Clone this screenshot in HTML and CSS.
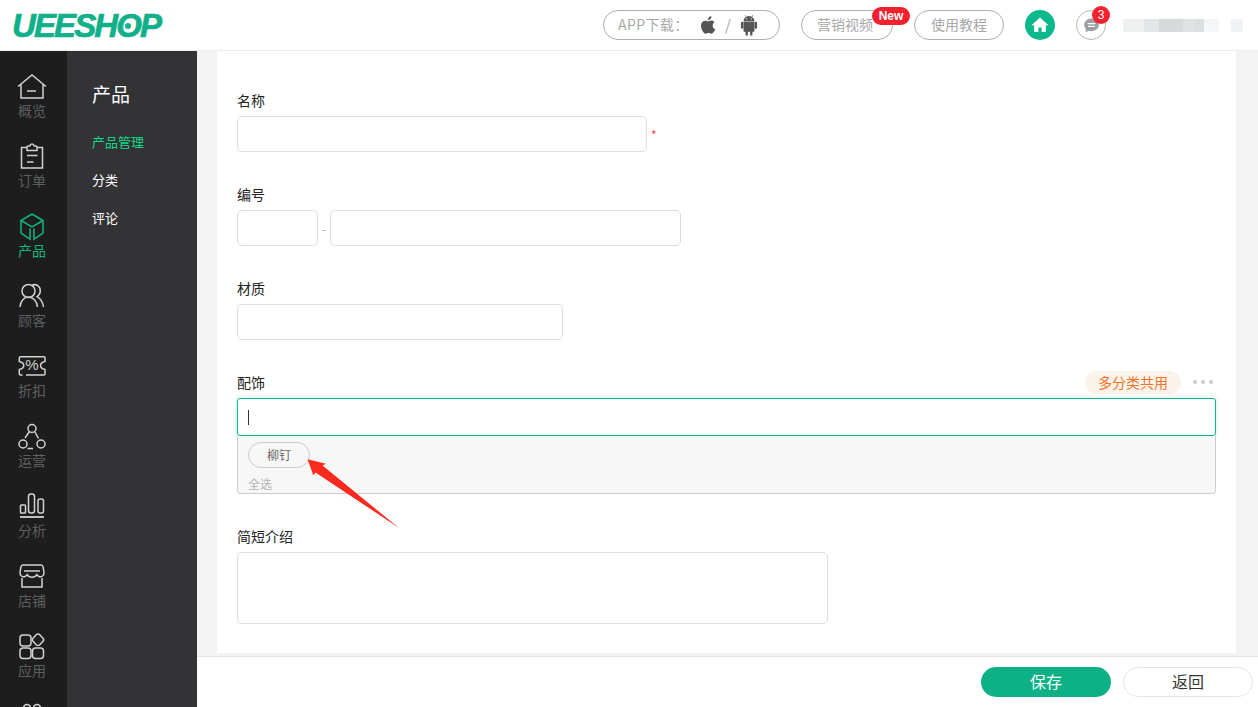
FILE: index.html
```html
<!DOCTYPE html>
<html lang="zh-CN">
<head>
<meta charset="utf-8">
<title>UEESHOP</title>
<link rel="stylesheet" href="styles.css">
</head>
<body>
<div class="app">
  <header class="topbar">
    <div class="logo"><span class="logo-text">UEESHOP</span><i class="logo-dot"></i></div>
    <div class="top-actions">
      <div class="pill pill-app">
        <span class="app-text">APP下载：</span>
        <svg class="os os-apple" viewBox="0 0 24 24" width="22" height="22"><path fill="#555" d="M17.100 12.700c0-2.400 2-3.500 2-3.600-1.100-1.600-2.800-1.800-3.400-1.900-1.400-.1-2.800.9-3.500.9-.7 0-1.900-.9-3.100-.8-1.600 0-3.100.9-3.900 2.300-1.700 2.900-.4 7.200 1.200 9.500.8 1.200 1.800 2.400 3 2.400 1.200 0 1.700-.8 3.100-.8 1.500 0 1.900.8 3.200.8 1.300 0 2.100-1.200 2.900-2.300.9-1.300 1.300-2.600 1.300-2.700-.1 0-2.800-1.100-2.800-3.800zM14.700 5.500c.7-.8 1.100-1.900 1-3-.9 0-2.100.6-2.800 1.400-.6.7-1.100 1.800-1 2.900 1.100.1 2.100-.5 2.800-1.300z"/></svg>
        <span class="slash">/</span>
        <svg class="os os-android" viewBox="0 0 24 24" width="22" height="22"><path fill="#555" d="M6 8.500h12v9.700c0 .7-.5 1.200-1.200 1.200h-1v2.900a1.300 1.300 0 0 1-2.600 0v-2.900h-2.400v2.900a1.300 1.300 0 0 1-2.600 0v-2.900h-1c-.7 0-1.200-.5-1.200-1.200zM4.400 8.500c.7 0 1.200.6 1.200 1.200v5.300a1.200 1.200 0 0 1-2.400 0V9.700c0-.6.500-1.200 1.200-1.200zM19.600 8.500c.7 0 1.200.6 1.200 1.200v5.300a1.200 1.200 0 0 1-2.400 0V9.700c0-.6.500-1.200 1.200-1.200zM15.400 3.200l1.100-1.700-.4-.3-1.200 1.800a6.600 6.600 0 0 0-5.800 0L7.900 1.200l-.4.300 1.100 1.700A5.200 5.200 0 0 0 6 7.800h12a5.200 5.200 0 0 0-2.600-4.600zM9.500 6a.6.600 0 1 1 0-1.300.6.600 0 0 1 0 1.300zm5 0a.6.600 0 1 1 0-1.300.6.600 0 0 1 0 1.300z"/></svg>
      </div>
      <div class="pill pill-video">营销视频<span class="badge-new">New</span></div>
      <div class="pill pill-help">使用教程</div>
      <div class="circle-home">
        <svg viewBox="0 0 20 20" width="20" height="20"><path fill="#fff" d="M10 2.500 1.500 10.300h2.600V17h4.300v-4.400h3.200V17h4.300v-6.700h2.600z"/></svg>
      </div>
      <div class="circle-msg">
        <svg viewBox="0 0 20 20" width="19" height="19"><path fill="#9b9fa3" d="M10 2.500c-4.400 0-7.700 3-7.700 6.800 0 1.800.8 3.400 2 4.600l-.8 3.300 3.500-1.700c.9.300 1.900.5 3 .5 4.400 0 7.700-3 7.700-6.700S14.400 2.500 10 2.500z"/><path stroke="#fff" stroke-width="1.300" d="M6 8h8M6.500 11h7"/></svg>
        <span class="badge-count">3</span>
      </div>
      <div class="blur-name"><i></i><i></i></div>
    </div>
  </header>

  <div class="workspace">
    <nav class="nav">
      <a class="nav-item"><svg viewBox="0 0 30 30"><path d="M1 13.500 15 2l14 11.500M4 11.500V25h22V11.500M10 18h9"/></svg><span>概览</span></a>
      <a class="nav-item"><svg viewBox="0 0 30 30"><path d="M10 4.500H4.500V25h21V4.500H20M10 7.500V4c0-.6.400-1 1-1h1.800c.3-1.200 1.200-2 2.200-2s1.900.8 2.200 2H19c.6 0 1 .4 1 1v3.500zM10 12.500h10.500M10 19h6.500"/></svg><span>订单</span></a>
      <a class="nav-item active"><svg viewBox="0 0 30 30"><path d="M15 1 26 7.500V20l-9 6V15.500M26 7.500 15 14 4 7.500 15 1M4 7.500V20l9 6V15.500"/></svg><span>产品</span></a>
      <a class="nav-item"><svg viewBox="0 0 30 30"><circle cx="11.500" cy="8" r="6.500"/><path d="M3 24c.5-6 4-10 8.500-10s8.500 4 9 10M15 2.200c4-1.700 8.500.8 8.300 5.800-.1 2.600-1.400 4.400-3.300 5.600 3.500 2 6 5.500 6.500 10.400"/></svg><span>顾客</span></a>
      <a class="nav-item"><svg viewBox="0 0 30 30"><path d="M3.500 3.700h23.300c.7 0 1.200.5 1.200 1.200v3.600c-2.500.6-4.500 1.800-4.500 4s2 3.400 4.500 4v4.300c0 .7-.5 1.200-1.200 1.200H9M5.500 22H3.500c-.7 0-1.200-.5-1.200-1.200v-4.300c2.500-.6 4.500-1.800 4.500-4s-2-3.400-4.500-4V4.900c0-.7.500-1.200 1.200-1.200"/></svg><b class="pct">%</b><span>折扣</span></a>
      <a class="nav-item"><svg viewBox="0 0 30 30"><circle cx="15" cy="5.500" r="4"/><circle cx="6" cy="21" r="4"/><circle cx="24" cy="21" r="4"/><path d="M12.500 8.500 8 15M18 9l3.500 6.500M10.500 25.500h5.500"/></svg><span>运营</span></a>
      <a class="nav-item"><svg viewBox="0 0 30 30"><rect x="3.500" y="12" width="5" height="8" rx=".8"/><rect x="11.500" y="1" width="6" height="19" rx="2.500"/><rect x="21" y="6" width="5.500" height="14" rx="2"/><path d="M3 24h24" stroke-width="1.800"/></svg><span>分析</span></a>
      <a class="nav-item"><svg viewBox="0 0 30 30"><path d="M6 2h18c1 0 1.500.5 2 1.500l1 6c.2 3-2.500 5-5 4-1-.3-1.600-1-2.200-1.800-.8 1.500-2.500 2.600-4.800 2.600s-4-1.100-4.800-2.600C9.600 12.500 9 13.200 8 13.500c-2.500 1-5.200-1-5-4l1-6C4.500 2.500 5 2 6 2zM7 8h16M5 15v9h20v-9"/></svg><span>店铺</span></a>
      <a class="nav-item"><svg viewBox="0 0 30 30"><rect x="3" y="2" width="11" height="11" rx="3"/><rect x="3" y="15" width="11" height="10.500" rx="3"/><rect x="15.500" y="15" width="11" height="10.500" rx="3"/><path d="M19.500 1.500c.8-.8 2.200-.8 3 0l3.500 3.800c.8.800.8 2.100 0 2.900L22.500 12c-.8.800-2.200.8-3 0L16 8.200c-.8-.8-.8-2.100 0-2.900z"/></svg><span>应用</span></a>
      <a class="nav-item"><svg viewBox="0 0 30 30"><circle cx="10" cy="5" r="3.500"/><circle cx="20" cy="5" r="3.500"/></svg></a>
    </nav>

    <aside class="subnav">
      <h2>产品</h2>
      <a class="sub-link active">产品管理</a>
      <a class="sub-link">分类</a>
      <a class="sub-link">评论</a>
    </aside>

    <main class="main">
      <div class="scroll">
        <form class="card">
          <div class="field">
            <label class="label">名称</label>
            <div class="line"><input class="input w-name" type="text"><em class="req">*</em></div>
          </div>
          <div class="field">
            <label class="label">编号</label>
            <div class="line"><input class="input w-pre" type="text"><span class="dash">-</span><input class="input w-num" type="text"></div>
          </div>
          <div class="field">
            <label class="label">材质</label>
            <div class="line"><input class="input w-mat" type="text"></div>
          </div>
          <div class="field field-acc">
            <div class="label-row">
              <label class="label">配饰</label>
              <div class="label-tools"><span class="shared">多分类共用</span><span class="dots"><i></i><i></i><i></i></span></div>
            </div>
            <div class="focus-box"><i class="caret"></i></div>
            <div class="options">
              <span class="chip">柳钉</span>
              <span class="all">全选</span>
            </div>
          </div>
          <div class="field">
            <label class="label">简短介绍</label>
            <textarea class="input area"></textarea>
          </div>
        </form>
      </div>
      <footer class="actions">
        <button class="btn btn-save" type="button">保存</button>
        <button class="btn btn-back" type="button">返回</button>
      </footer>
    </main>
  </div>
</div>
<svg class="arrow" viewBox="0 0 100 75" width="100" height="75"><path fill="#fb2a1e" d="M.5 2.300 19 6.700 15.500 8.500 92 71 8.500 15.500 6.300 18.300z"/></svg>
</body>
</html>
```
FILE: styles.css
```css
* { box-sizing: border-box; }
html, body { margin: 0; height: 100%; overflow: hidden; }
body {
  font-family: "Noto Sans CJK SC", "Liberation Sans", sans-serif;
  font-size: 14px;
  color: #222;
  background: #fff;
}
.app { display: flex; flex-direction: column; width: 1258px; height: 707px; }

/* top bar */
.topbar {
  flex: 0 0 51px;
  display: flex;
  justify-content: space-between;
  background: #fff;
  border-bottom: 1px solid #eee;
}
.logo { position: relative; padding: 10px 0 0 12px; }
.logo-text {
  font: italic 700 33px/32px "Liberation Sans", sans-serif;
  color: #10b08a;
  letter-spacing: -1.900px;
  -webkit-text-stroke: .7px #10b08a;
}
.logo-dot { position: absolute; left: 125px; top: 23px; width: 6px; height: 6px; border-radius: 50%; background: #10b08a; }
.top-actions { display: flex; align-items: flex-start; padding: 10px 0 0 0; }
.pill {
  position: relative;
  display: flex;
  align-items: center;
  justify-content: center;
  height: 30px;
  padding-bottom: 2px;
  border: 1px solid #a9b0ae;
  border-radius: 15px;
  color: #a8a8a8;
  font-size: 14px;
}
.pill-app { width: 177px; justify-content: flex-start; padding: 0 0 0 14px; }
.app-text { flex: none; width: 68px; letter-spacing: .4px; padding-bottom: 2px; white-space: nowrap; }
.os { flex: none; }
.os-apple { margin-left: 11px; }
.os-android { margin-left: 7px; }
.slash { flex: none; margin-left: 6px; font-size: 15px; padding-bottom: 2px; }
.pill-video { width: 92px; margin-left: 21px; padding-right: 4px; }
.pill-help { width: 90px; margin-left: 21px; }
.badge-new {
  position: absolute;
  left: 70px;
  top: -4px;
  width: 38px;
  height: 18px;
  border-radius: 9px;
  background: #f6202e;
  color: #fff;
  font: 700 12px/18px "Liberation Sans", sans-serif;
  text-align: center;
}
.circle-home {
  display: flex; align-items: center; justify-content: center;
  width: 30px; height: 30px; margin-left: 21px;
  border-radius: 50%; background: #0cb98c;
}
.circle-msg {
  position: relative;
  display: flex; align-items: center; justify-content: center;
  width: 30px; height: 30px; margin-left: 21px;
  border: 1px solid #b4b9b8; border-radius: 50%;
}
.badge-count {
  position: absolute; left: 15px; top: -5px;
  width: 18px; height: 18px; border-radius: 50%;
  background: #f6202e; color: #fff;
  font: 400 12px/18px "Liberation Sans", sans-serif; text-align: center;
}
.blur-name { display: flex; align-items: center; height: 13px; margin: 9px 15px 0 17px; }
.blur-name i { display: block; height: 13px; }
.blur-name i:first-child {
  width: 96px;
  background: linear-gradient(90deg, #eef0f0 0 22%, #e3e6e6 22% 38%, #d6dadb 38% 62%, #e0e3e3 62% 75%, #dcdfdf 75% 84%, #f4f6f8 84%);
}
.blur-name i:last-child { width: 12px; margin-left: 12px; background: #f0f2f5; }

.workspace { flex: 1; display: flex; min-height: 0; }

/* primary nav */
.nav { flex: 0 0 67px; background: #1d1d1d; overflow: hidden; }
.nav-item {
  position: relative;
  display: flex;
  flex-direction: column;
  align-items: center;
  height: 70px;
  padding: 22px 3px 0 0;
  color: #5d5f60;
  font-size: 14px;
  line-height: 20px;
}
.nav-item svg {
  flex: none;
  width: 30px; height: 30px; margin-bottom: -3px;
  fill: none; stroke: #d2d2d2; stroke-width: 1.500;
}
.nav-item.active, .nav-item.active span { color: #10b77f; }
.nav-item.active svg { stroke: #10b77f; }
.pct {
  position: absolute; left: 0; right: 3px; top: 24px;
  font: 400 15px/20px "Liberation Sans", sans-serif;
  color: #d2d2d2; text-align: center;
}

/* secondary nav */
.subnav { flex: 0 0 130px; background: #333336; padding: 30px 0 0 25px; color: #fff; }
.subnav h2 { margin: 0 0 25px; font-size: 19px; font-weight: 400; line-height: 26px; }
.sub-link { display: block; height: 38px; font-size: 13px; line-height: 20px; }
.sub-link.active { color: #10d98a; }

/* content */
.main { flex: 1; display: flex; flex-direction: column; min-width: 0; background: #f3f3f3; }
.scroll { flex: 1; padding: 0 22px 3px 20px; min-height: 0; }
.card { height: 100%; background: #fff; padding: 40px 20px 0; overflow: hidden; }
.field { margin-bottom: 33px; }
.label { display: block; height: 20px; margin-bottom: 5px; font-size: 14px; line-height: 18px; color: #222; }
.line { display: flex; align-items: center; }
.input {
  display: block;
  height: 36px;
  border: 1px solid #ddd;
  border-radius: 5px;
  background: #fff;
  outline: none;
  padding: 0 10px;
  font: inherit;
}
.w-name { width: 410px; }
.w-pre { width: 81px; }
.w-num { width: 351px; }
.w-mat { width: 326px; }
.area { width: 591px; height: 72px; resize: none; }
.req { margin-left: 4px; font-style: normal; font-size: 12px; color: #f0443c; }
.dash { width: 12px; text-align: center; font-size: 12px; color: #aaa; }
.label-row { display: flex; justify-content: space-between; height: 22px; margin-top: -1px; margin-bottom: 4px; }
.label-row .label { margin: 1px 0 0; }
.label-tools { display: flex; align-items: center; padding: 0 3px 2px 0; }
.shared {
  width: 96px; height: 23px;
  border-radius: 12px;
  background: #faf3e9;
  color: #f5732a;
  font-size: 14px;
  line-height: 22px;
  text-align: center;
}
.dots { display: flex; gap: 4px; margin-left: 12px; }
.dots i { width: 4px; height: 4px; border-radius: 50%; background: #ccc; }
.focus-box {
  display: flex; align-items: center;
  height: 38px;
  padding-left: 10px;
  border: 1px solid #0cb98c;
  border-radius: 3px;
  box-shadow: 0 0 4px rgba(12, 185, 140, .25);
}
.caret { display: block; width: 1px; height: 15px; background: #333; }
.options {
  position: relative;
  height: 58px;
  padding: 6px 10px 0;
  background: #f7f7f7;
  border: 1px solid #ccc;
  border-top: 0;
  border-radius: 0 0 4px 4px;
}
.chip {
  display: block;
  width: 62px; height: 26px;
  border: 1px solid #ccc;
  border-radius: 13px;
  color: #666;
  font-size: 12px;
  line-height: 24px;
  text-align: center;
}
.all { display: block; margin-top: 6px; font-size: 12px; line-height: 20px; color: #b5b5b5; }

/* footer */
.actions {
  flex: 0 0 51px;
  display: flex;
  justify-content: flex-end;
  align-items: flex-start;
  gap: 12px;
  padding: 10px 5px 0 0;
  background: #fff;
  border-top: 1px solid #e5e5e5;
}
.btn {
  width: 130px; height: 30px;
  border-radius: 15px;
  font: 16px/26px "Noto Sans CJK SC", sans-serif;
  padding: 0 0 2px;
}
.btn-save { border: 0; background: #0eb086; color: #fff; }
.btn-back { border: 1px solid #e6e6e6; background: #fff; color: #333; }

.arrow { position: absolute; left: 307px; top: 457px; }
```
